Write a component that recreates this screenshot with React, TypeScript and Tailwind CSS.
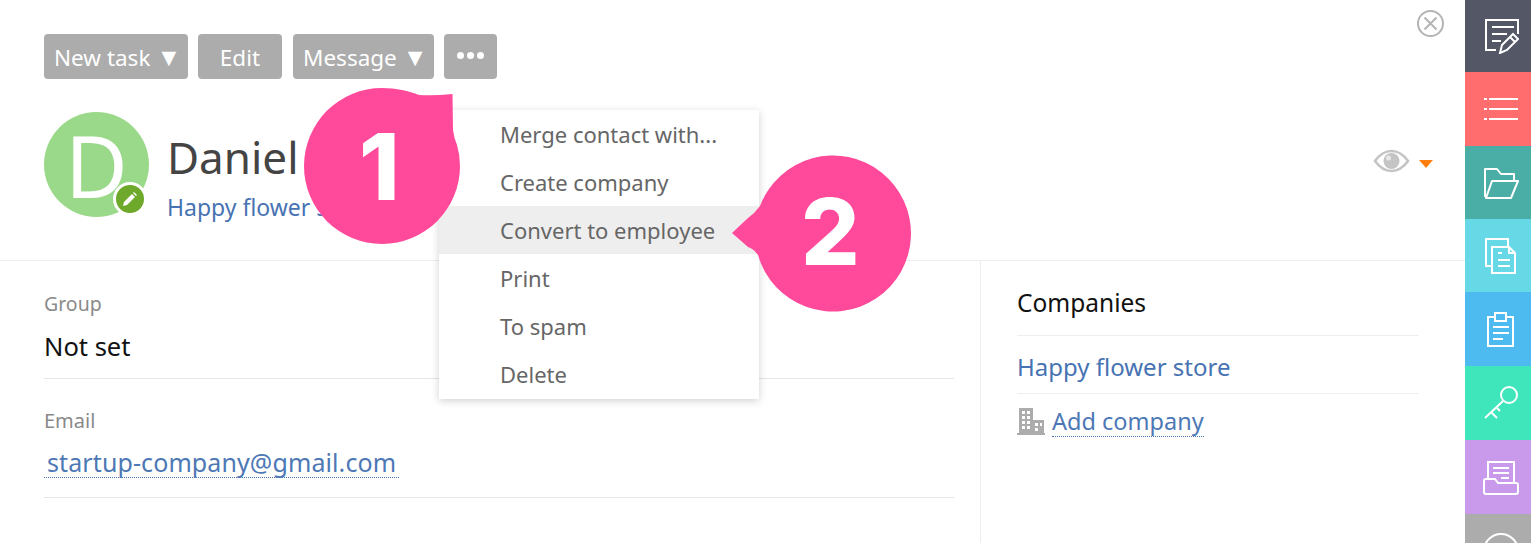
const GreyBtn = ({ label, caret, className }: { label: string; caret?: boolean; className: string }) => (
  <button className={`flex h-[45px] items-center rounded-[4px] bg-[#acacac] text-[22.5px] text-white ${className}`}>
    <span className="pt-[3px]">{label}</span>
    {caret && <span className="ml-[6px] pb-[1px] text-[25px] leading-none">▼</span>}
  </button>
);

const RailIcon = ({ children }: { children: React.ReactNode }) => (
  <svg width="36" height="36" viewBox="0 0 36 36" fill="none" stroke="#fff" strokeWidth="2">
    {children}
  </svg>
);

const railItems = [
  {
    bg: "bg-[#535766]",
    h: "h-[72px]",
    icon: (
      <>
        <path d="M13 32H3V2h32v14" />
        <path d="M9 9h22M9 16h15M9 23h9" />
        <path d="M17 35l2-8 11-11 5 5-11 11zM27 19l5 5" />
      </>
    ),
  },
  {
    bg: "bg-[#ff6d6e]",
    h: "h-[74px]",
    icon: <path d="M1 8h3M6 8h29M1 18h3M6 18h29M1 28h3M6 28h29" />,
  },
  {
    bg: "bg-[#4aaea6]",
    h: "h-[73px]",
    icon: <path d="M2 32V4h12l4 5h13v7M3 33h25l7-17H9z" strokeLinejoin="round" />,
  },
  {
    bg: "bg-[#67d9e6]",
    h: "h-[73px]",
    icon: (
      <>
        <path d="M9 28H3V1h22v8" />
        <path d="M9 9h17l6 6v20H9zM26 9v6h6M15 15h4M15 22h12M15 28h12" />
      </>
    ),
  },
  {
    bg: "bg-[#4dbaf0]",
    h: "h-[74px]",
    icon: (
      <>
        <path d="M11 6H5v29h25V6h-6" />
        <path d="M12 2h11v8H12zM10 16h16M10 22h16M10 28h10" />
      </>
    ),
  },
  {
    bg: "bg-[#3fe5bb]",
    h: "h-[74px]",
    icon: (
      <>
        <circle cx="26" cy="10" r="8" />
        <path d="M20 16L2 33M8 27l6 6M13 22l4 4" />
      </>
    ),
  },
  {
    bg: "bg-[#c99aeb]",
    h: "h-[74px]",
    icon: (
      <>
        <path d="M5 19V3h26v21M10 9h16M10 14h16M18 19h8" />
        <path d="M1 22a2 2 0 012-2h9l3 4h18a2 2 0 012 2v7a2 2 0 01-2 2H3a2 2 0 01-2-2z" />
      </>
    ),
  },
];

const menu = ["Merge contact with...", "Create company", "Convert to employee", "Print", "To spam", "Delete"];

const Bubble = ({ num, d, className }: { num: string; d: string; className: string }) => (
  <div className={`absolute ${className}`}>
    <svg width="180" height="180" viewBox="0 0 180 180" className="absolute left-0 top-0">
      <path d={d} fill="#ff4a9b" />
    </svg>
    <span
      className="absolute text-[92px] font-extrabold leading-none text-white"
      style={{ fontFamily: "Inter, sans-serif" }}
    >
      {num}
    </span>
  </div>
);

export default function App() {
  return (
    <div
      className="relative flex h-[543px] w-[1531px] overflow-hidden bg-white"
      style={{ fontFamily: '"Noto Sans", sans-serif' }}
    >
      <main className="relative flex-1">
        <header className="h-[261px] border-b border-[#eeeeee] pl-[44px] pt-[34px]">
          <div className="flex items-center">
            <GreyBtn label="New task" caret className="w-[144px] pl-[10px]" />
            <GreyBtn label="Edit" className="ml-[10px] w-[84px] justify-center" />
            <GreyBtn label="Message" caret className="ml-[11px] w-[141px] pl-[10px]" />
            <button className="ml-[10px] flex h-[45px] w-[53px] items-center justify-center gap-[3px] rounded-[4px] bg-[#acacac] pb-[2px]">
              <span className="size-[7px] rounded-full bg-white" />
              <span className="size-[7px] rounded-full bg-white" />
              <span className="size-[7px] rounded-full bg-white" />
            </button>
          </div>
          <div className="mt-[33px] flex">
            <div className="relative size-[105px] rounded-full bg-[#9bd98a] text-center text-[86px] leading-[105px] text-white">
              D
              <span className="absolute left-[69px] top-[70px] flex size-[34px] items-center justify-center rounded-full border-[3px] border-white bg-[#6ea92c]">
                <svg width="16" height="16" viewBox="0 0 16 16" fill="#fff">
                  <path d="M1 15l1-4 8-8 3 3-8 8zM11 2l1-1 3 3-1 1z" />
                </svg>
              </span>
            </div>
            <div className="ml-[18px]">
              <div className="mt-[15px] text-[44px] leading-[60px] text-[#444444]">Daniel</div>
              <div className="mt-[5px] text-[23px] leading-[30px] text-[#4773b3]">Happy flower store</div>
            </div>
          </div>
        </header>

        <div className="flex h-[282px]">
          <div className="w-[981px] border-r border-[#eeeeee] pl-[44px] pr-[26px]">
            <div className="h-[118px] border-b border-[#e6e6e6] pt-[31px]">
              <div className="text-[19.5px] leading-[24px] text-[#8a8a8a]">Group</div>
              <div className="mt-[14px] text-[25.5px] leading-[32px] text-[#111111]">Not set</div>
            </div>
            <div className="h-[119px] border-b border-[#e6e6e6] pt-[30px]">
              <div className="text-[20px] leading-[24px] text-[#8a8a8a]">Email</div>
              <div className="mt-[15px] inline-block border-b border-dotted border-[#4773b3] px-[3px] text-[25px] leading-[29px] tracking-[0.1px] text-[#4d78b5]">
                startup-company@gmail.com
              </div>
            </div>
          </div>
          <aside className="flex-1 pl-[36px] pr-[46px]">
            <div className="h-[75px] border-b border-[#eeeeee] pt-[26px] text-[24.5px] leading-[32px] text-[#111111]">
              Companies
            </div>
            <div className="h-[58px] border-b border-[#eeeeee] pt-[15px] text-[24px] leading-[32px] text-[#4773b3]">
              Happy flower store
            </div>
            <div className="mt-[11px] flex items-center">
              <svg width="28" height="28" viewBox="0 0 28 28" fill="#acacac">
                <path d="M2 1h14v12h11v13h1v2H0v-2h2zM5 4v3h3V4zm5 0v3h3V4zM5 9v3h3V9zm5 0v3h3V9zM5 14v3h3v-3zm5 0v3h3v-3zm8 2v3h3v-3zm5 0v3h2v-3zM5 19v3h3v-3zm5 0v3h3v-3zm8 2v3h3v-3z" fillRule="evenodd" />
              </svg>
              <span className="ml-[7px] border-b border-dotted border-[#4773b3] pt-[1px] text-[23.5px] leading-[30px] text-[#4d78b5]">
                Add company
              </span>
            </div>
          </aside>
        </div>

        <svg className="absolute left-[1416px] top-[9px]" width="29" height="29" viewBox="0 0 29 29" fill="none" stroke="#b4b4b4" strokeWidth="2">
          <circle cx="14.5" cy="14.5" r="12.5" />
          <path d="M8.500 8.500l12 12M20.500 8.500l-12 12" />
        </svg>
        <svg className="absolute left-[1373px] top-[148px]" width="37" height="26" viewBox="0 0 37 26" fill="none" stroke="#c4c4c4" strokeWidth="2.5">
          <path d="M2 13C7 6 12 3 18.500 3S30 6 35 13c-5 7-10 10-16.500 10S7 20 2 13z" />
          <circle cx="18.500" cy="13" r="8" fill="#c4c4c4" stroke="none" />
          <circle cx="15.500" cy="10" r="2.500" fill="#e8e8e8" stroke="none" />
        </svg>
        <span className="absolute left-[1419px] top-[160px] size-0 border-x-[7px] border-t-[8px] border-x-transparent border-t-[#ff7f0e]" />

        <ul className="absolute left-[439px] top-[110px] w-[320px] bg-white pb-[1px] shadow-[0_2px_8px_rgba(0,0,0,0.18)]">
          {menu.map((item, i) => (
            <li
              key={item}
              className={`h-[48px] pl-[61px] text-[22px] leading-[48px] text-[#666666] ${i === 2 ? "bg-[#eeeeee]" : ""}`}
            >
              {item}
            </li>
          ))}
        </ul>

        <Bubble
          num="1"
          d="M78 0C92 0 105 3 115 7Q130 8 148.500 6L149 42Q150 50 153 57Q156 67 156 78A78 78 0 1 1 78 0Z"
          className="left-[304px] top-[88px] size-[180px] [&>span]:left-[55px] [&>span]:top-[33px]"
        />
        <Bubble
          num="2"
          d="M28 51A78 78 0 1 1 26 100Q22 94 16 92L0 78 16 63Q23 58 28 51Z"
          className="left-[732px] top-[155px] size-[180px] [&>span]:left-[69px] [&>span]:top-[31px]"
        />
      </main>

      <nav className="flex w-[66px] shrink-0 flex-col shadow-[inset_6px_0_6px_-4px_rgba(0,0,0,0.25)]">
        {railItems.map((r) => (
          <div key={r.bg} className={`flex shrink-0 items-center justify-center pl-[6px] ${r.h} ${r.bg}`}>
            <RailIcon>{r.icon}</RailIcon>
          </div>
        ))}
        <div className="flex flex-1 justify-center bg-[#acacac] pl-[6px] pt-[19px]">
          <span className="size-[36px] shrink-0 rounded-full border-2 border-white" />
        </div>
      </nav>
    </div>
  );
}
